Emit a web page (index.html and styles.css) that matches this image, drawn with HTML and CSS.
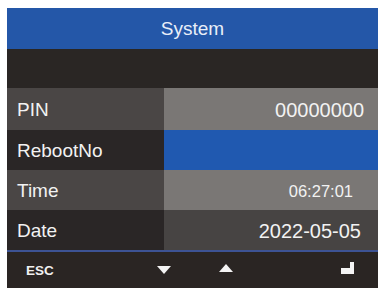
FILE: index.html
```html
<!DOCTYPE html>
<html>
<head>
<meta charset="utf-8">
<link rel="stylesheet" href="styles.css">
</head>
<body>
<div class="screen">
  <div class="header">System</div>
  <div class="spacer"></div>
  <div class="row light">
    <div class="label">PIN</div>
    <div class="value">00000000</div>
  </div>
  <div class="row dark">
    <div class="label">RebootNo</div>
    <div class="value selected"></div>
  </div>
  <div class="row light">
    <div class="label">Time</div>
    <div class="value small">06:27:01</div>
  </div>
  <div class="row dark">
    <div class="label">Date</div>
    <div class="value">2022-05-05</div>
  </div>
  <div class="footer">
    <span class="esc">ESC</span>
    <svg class="tri down" width="14" height="8" viewBox="0 0 14 8"><path d="M0 0 H14 L7 8 Z" fill="#f4f4f4"/></svg>
    <svg class="tri up" width="14" height="8" viewBox="0 0 14 8"><path d="M0 8 H14 L7 0 Z" fill="#f4f4f4"/></svg>
    <svg class="enter" width="15" height="13" viewBox="0 0 15 13"><path d="M10 0 H14 V12 H1 V6 H10 Z" fill="#f4f4f4"/></svg>
  </div>
</div>
</body>
</html>
```
FILE: styles.css
```css
html, body {
  margin: 0;
  padding: 0;
  background: #ffffff;
}
body {
  padding: 8px 4px 2px 7px;
  font-family: "Liberation Sans", Arial, sans-serif;
  color: #f2f2f2;
}
.screen {
  width: 371px;
  background: #2a2624;
  display: flex;
  flex-direction: column;
}
.header {
  height: 41px;
  background: #2457a8;
  display: flex;
  align-items: center;
  justify-content: center;
  font-size: 19px;
  color: #e8eef8;
}
.spacer {
  height: 39px;
  background: #2a2624;
}
.row {
  display: grid;
  grid-template-columns: 157px 1fr;
  height: 40px;
  font-size: 19px;
}
.row:nth-of-type(3) { height: 42px; }
.label {
  display: flex;
  align-items: center;
  padding-left: 10px;
  padding-top: 2px;
}
.value {
  display: flex;
  align-items: center;
  justify-content: flex-end;
  padding-right: 14px;
  padding-top: 2px;
  font-size: 20px;
}
.value.small {
  font-size: 16.5px;
  padding-right: 25px;
}
.row.light .label { background: #4a4645; }
.row.light .value { background: #7a7775; }
.row.dark .label { background: #2a2626; }
.row.dark .value { background: #474443; padding-right: 17px; }
.row.dark .value.selected { background: #2059b0; }
.footer {
  height: 36px;
  border-top: 2px solid #3d5394;
  background: #2a2523;
  display: flex;
  align-items: center;
}
.esc {
  font-size: 13.5px;
  margin-left: 19px;
  width: 131px;
  font-weight: bold;
  color: #f0f0f0;
}
.tri.down { margin-left: 0; }
.tri.up { margin-left: 48px; margin-top: -4px; }
.enter { margin-left: 107px; margin-top: -4px; }
```
